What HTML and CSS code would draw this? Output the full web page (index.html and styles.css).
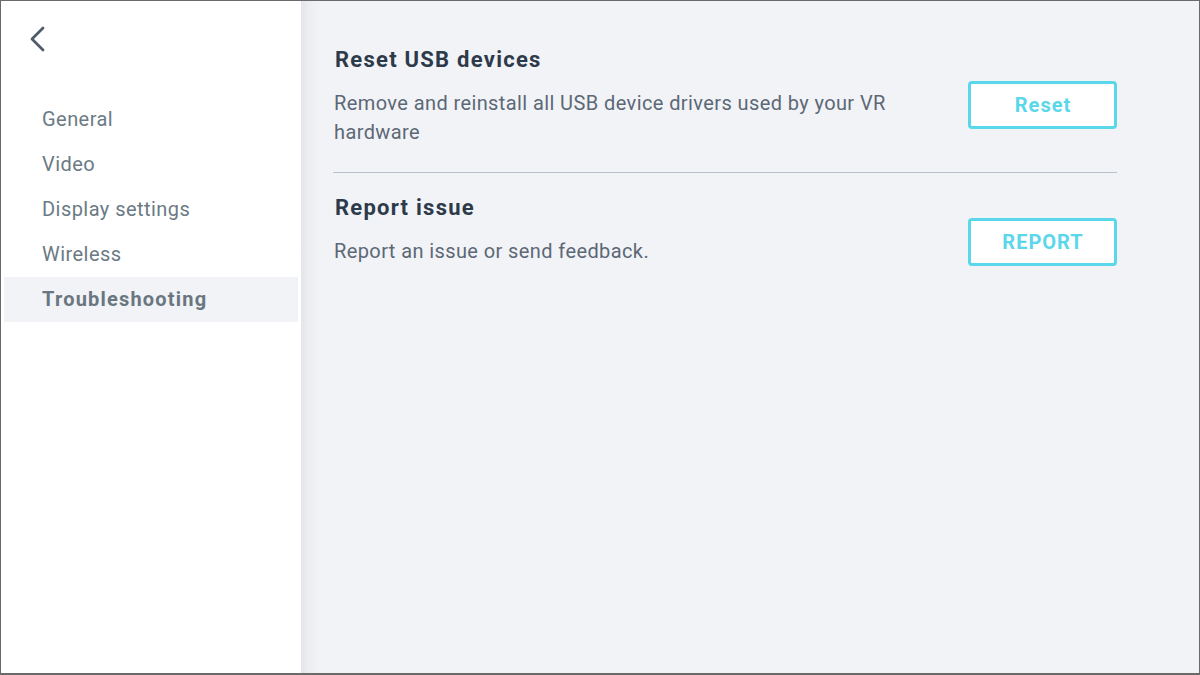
FILE: index.html
```html
<!DOCTYPE html>
<html>
<head>
<meta charset="utf-8">
<link rel="stylesheet" href="styles.css">
</head>
<body>
<div class="window">
  <aside class="sidebar">
    <div class="back">
      <svg width="20" height="30" viewBox="0 0 20 30"><path d="M14 2 L3 13 L14 24" fill="none" stroke="#4d5b6b" stroke-width="2.8" stroke-linecap="round" stroke-linejoin="round"/></svg>
    </div>
    <nav class="nav">
      <div class="nav-item">General</div>
      <div class="nav-item">Video</div>
      <div class="nav-item">Display settings</div>
      <div class="nav-item">Wireless</div>
      <div class="nav-item active">Troubleshooting</div>
    </nav>
  </aside>
  <main class="main">
    <section class="section first">
      <div class="text">
        <h2 class="title">Reset USB devices</h2>
        <p class="desc">Remove and reinstall all USB device drivers used by your VR hardware</p>
      </div>
      <button class="btn btn-reset">Reset</button>
    </section>
    <section class="section second">
      <div class="text">
        <h2 class="title">Report issue</h2>
        <p class="desc">Report an issue or send feedback.</p>
      </div>
      <button class="btn btn-report">REPORT</button>
    </section>
  </main>
</div>
</body>
</html>
```

FILE: styles.css
```css
* { box-sizing: border-box; }
html, body { margin: 0; padding: 0; }
body {
  font-family: Roboto, "Liberation Sans", sans-serif;
  background: #fff;
}
.window {
  width: 1200px;
  height: 675px;
  border: 1px solid #6a6a6a;
  border-bottom-width: 2px;
  display: flex;
  overflow: hidden;
}
.sidebar {
  width: 300px;
  flex: none;
  background: #fff;
  padding: 25px 3px 0 3px;
}
.back {
  height: 71px;
  padding-left: 25px;
}
.back svg { display: block; }
.nav { display: flex; flex-direction: column; }
.nav-item {
  height: 45px;
  line-height: 45px;
  padding-left: 38px;
  font-size: 20px;
  letter-spacing: 0.45px;
  color: #6b7a84;
}
.nav-item.active {
  background: #f1f3f7;
  font-weight: 700;
  letter-spacing: 1.2px;
  color: #6a7680;
}
.main {
  flex: 1;
  background: linear-gradient(to right, #e3e5ea 0px, #eceef2 8px, #f1f3f7 20px);
  padding: 44px 82px 0 32px;
}
.section {
  display: flex;
  justify-content: space-between;
  align-items: flex-start;
}
.section.first {
  border-bottom: 1px solid #b9c0cb;
  padding-bottom: 25px;
}
.section.second { padding-top: 20px; }
.text { max-width: 600px; padding-left: 1px; }
.title {
  margin: 0;
  padding-left: 1px;
  font-size: 22px;
  line-height: 30px;
  font-weight: 700;
  letter-spacing: 1.25px;
  color: #2d3a4a;
}
.desc {
  margin: 14px 0 0 0;
  font-size: 20px;
  line-height: 29px;
  letter-spacing: 0.4px;
  color: #5c6876;
}
.btn {
  width: 149px;
  height: 48px;
  border: 3px solid #5ad7ea;
  border-radius: 4px;
  background: #fff;
  color: #5ad7ea;
  font-family: Roboto, "Liberation Sans", sans-serif;
  font-size: 20px;
  font-weight: 700;
  letter-spacing: 1px;
  padding: 0 0 0 1px;
}
.btn-reset { margin-top: 36px; }
.btn-report { margin-top: 25px; }
```
